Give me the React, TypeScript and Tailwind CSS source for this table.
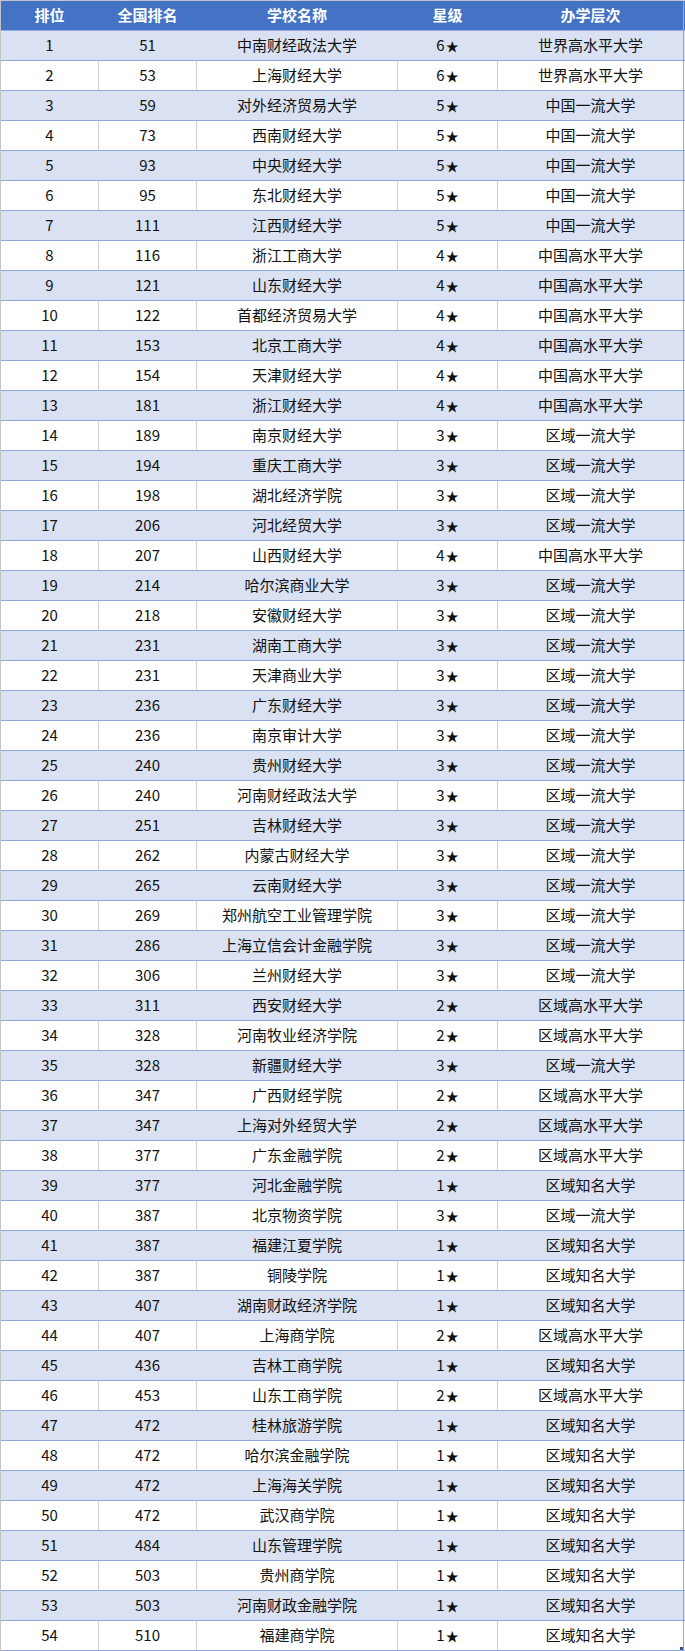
import React from "react";

type Row = [number, number, string, number, string];

const rows: Row[] = [
  [1, 51, "中南财经政法大学", 6, "世界高水平大学"],
  [2, 53, "上海财经大学", 6, "世界高水平大学"],
  [3, 59, "对外经济贸易大学", 5, "中国一流大学"],
  [4, 73, "西南财经大学", 5, "中国一流大学"],
  [5, 93, "中央财经大学", 5, "中国一流大学"],
  [6, 95, "东北财经大学", 5, "中国一流大学"],
  [7, 111, "江西财经大学", 5, "中国一流大学"],
  [8, 116, "浙江工商大学", 4, "中国高水平大学"],
  [9, 121, "山东财经大学", 4, "中国高水平大学"],
  [10, 122, "首都经济贸易大学", 4, "中国高水平大学"],
  [11, 153, "北京工商大学", 4, "中国高水平大学"],
  [12, 154, "天津财经大学", 4, "中国高水平大学"],
  [13, 181, "浙江财经大学", 4, "中国高水平大学"],
  [14, 189, "南京财经大学", 3, "区域一流大学"],
  [15, 194, "重庆工商大学", 3, "区域一流大学"],
  [16, 198, "湖北经济学院", 3, "区域一流大学"],
  [17, 206, "河北经贸大学", 3, "区域一流大学"],
  [18, 207, "山西财经大学", 4, "中国高水平大学"],
  [19, 214, "哈尔滨商业大学", 3, "区域一流大学"],
  [20, 218, "安徽财经大学", 3, "区域一流大学"],
  [21, 231, "湖南工商大学", 3, "区域一流大学"],
  [22, 231, "天津商业大学", 3, "区域一流大学"],
  [23, 236, "广东财经大学", 3, "区域一流大学"],
  [24, 236, "南京审计大学", 3, "区域一流大学"],
  [25, 240, "贵州财经大学", 3, "区域一流大学"],
  [26, 240, "河南财经政法大学", 3, "区域一流大学"],
  [27, 251, "吉林财经大学", 3, "区域一流大学"],
  [28, 262, "内蒙古财经大学", 3, "区域一流大学"],
  [29, 265, "云南财经大学", 3, "区域一流大学"],
  [30, 269, "郑州航空工业管理学院", 3, "区域一流大学"],
  [31, 286, "上海立信会计金融学院", 3, "区域一流大学"],
  [32, 306, "兰州财经大学", 3, "区域一流大学"],
  [33, 311, "西安财经大学", 2, "区域高水平大学"],
  [34, 328, "河南牧业经济学院", 2, "区域高水平大学"],
  [35, 328, "新疆财经大学", 3, "区域一流大学"],
  [36, 347, "广西财经学院", 2, "区域高水平大学"],
  [37, 347, "上海对外经贸大学", 2, "区域高水平大学"],
  [38, 377, "广东金融学院", 2, "区域高水平大学"],
  [39, 377, "河北金融学院", 1, "区域知名大学"],
  [40, 387, "北京物资学院", 3, "区域一流大学"],
  [41, 387, "福建江夏学院", 1, "区域知名大学"],
  [42, 387, "铜陵学院", 1, "区域知名大学"],
  [43, 407, "湖南财政经济学院", 1, "区域知名大学"],
  [44, 407, "上海商学院", 2, "区域高水平大学"],
  [45, 436, "吉林工商学院", 1, "区域知名大学"],
  [46, 453, "山东工商学院", 2, "区域高水平大学"],
  [47, 472, "桂林旅游学院", 1, "区域知名大学"],
  [48, 472, "哈尔滨金融学院", 1, "区域知名大学"],
  [49, 472, "上海海关学院", 1, "区域知名大学"],
  [50, 472, "武汉商学院", 1, "区域知名大学"],
  [51, 484, "山东管理学院", 1, "区域知名大学"],
  [52, 503, "贵州商学院", 1, "区域知名大学"],
  [53, 503, "河南财政金融学院", 1, "区域知名大学"],
  [54, 510, "福建商学院", 1, "区域知名大学"],
];

const font = { fontFamily: '"Noto Sans CJK SC", "Noto Sans", sans-serif' };

export default function App() {
  return (
    <div className="w-[685px] bg-white" style={font}>
      <div className="relative w-[685px] border-l border-t border-[#c4c4c4]">
        <div className="grid grid-cols-[98px_98px_201px_100px_186px] h-[30px] bg-[#4472C4] border-b border-[#8EA9DB] text-white font-bold text-[15px]">
          <div className="flex items-center justify-center border-r border-[#4472C4]">排位</div>
          <div className="flex items-center justify-center border-r border-[#4472C4]">全国排名</div>
          <div className="flex items-center justify-center border-r border-[#4472C4]">学校名称</div>
          <div className="flex items-center justify-center border-r border-[#4472C4]">星级</div>
          <div className="flex items-center justify-center border-r border-[#8EA9DB]">办学层次</div>
        </div>
        {rows.map((r, i) => {
          const odd = i % 2 === 0;
          const bg = odd ? "bg-[#D9E1F2]" : "bg-white";
          const vb = odd ? "border-[#D9E1F2]" : "border-[#D0D0D0]";
          return (
            <div
              key={r[0]}
              className={`grid grid-cols-[98px_98px_201px_100px_186px] h-[30px] border-b border-[#8EA9DB] text-[15px] text-[#111] ${bg}`}
            >
              <div className={`flex items-center justify-center border-r ${vb}`}>{r[0]}</div>
              <div className={`flex items-center justify-center border-r ${vb}`}>{r[1]}</div>
              <div className={`flex items-center justify-center border-r ${vb}`}>{r[2]}</div>
              <div className={`flex items-center justify-center border-r ${vb}`}>
                {r[3]}
                <span className="text-[13px] ml-[1px]">★</span>
              </div>
              <div className="flex items-center justify-center border-r border-[#8EA9DB]">{r[4]}</div>
            </div>
          );
        })}
        <div className="absolute right-[2px] bottom-[1px] w-[3px] h-[3px] bg-[#2F4F9F]" />
      </div>
    </div>
  );
}
